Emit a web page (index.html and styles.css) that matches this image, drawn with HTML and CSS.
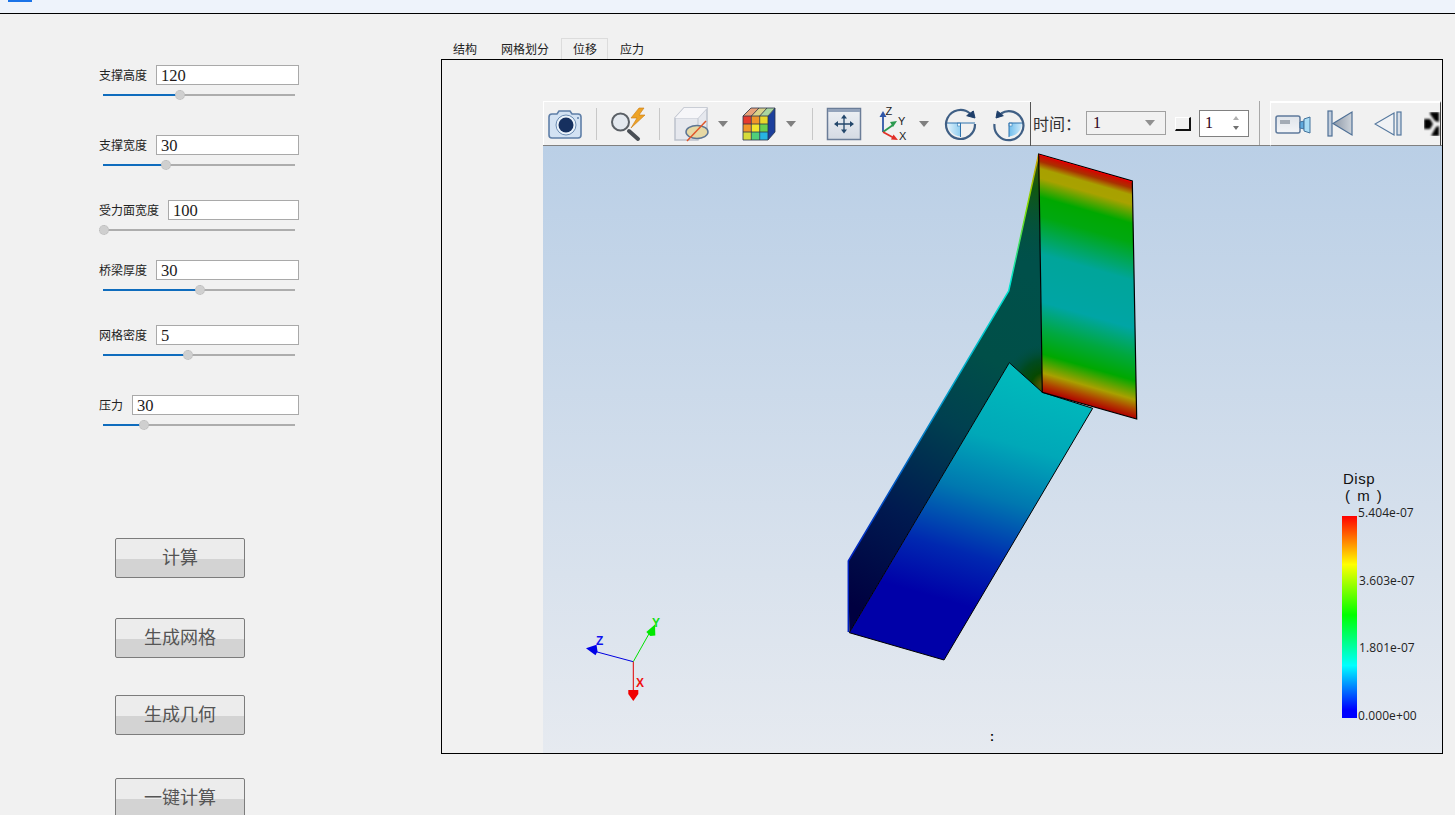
FILE: index.html
```html
<!DOCTYPE html>
<html lang="zh">
<head>
<meta charset="utf-8">
<title>位移</title>
<link rel="stylesheet" href="styles.css">
</head>
<body>
<header class="topbar"><span class="chip"></span></header>
<div class="main">
  <aside class="side">
    <div class="field gap-a">
      <div class="row"><label>支撑高度</label><input value="120"></div>
      <div class="slider"><i class="fill" style="width:77px"></i><b class="thumb"></b><i class="rest"></i></div>
    </div>
    <div class="field gap-b">
      <div class="row"><label>支撑宽度</label><input value="30"></div>
      <div class="slider"><i class="fill" style="width:63px"></i><b class="thumb"></b><i class="rest"></i></div>
    </div>
    <div class="field gap-c">
      <div class="row"><label>受力面宽度</label><input value="100"></div>
      <div class="slider"><i class="fill" style="width:1px"></i><b class="thumb"></b><i class="rest"></i></div>
    </div>
    <div class="field gap-b">
      <div class="row"><label>桥梁厚度</label><input value="30"></div>
      <div class="slider"><i class="fill" style="width:97px"></i><b class="thumb"></b><i class="rest"></i></div>
    </div>
    <div class="field gap-a">
      <div class="row"><label>网格密度</label><input value="5"></div>
      <div class="slider"><i class="fill" style="width:85px"></i><b class="thumb"></b><i class="rest"></i></div>
    </div>
    <div class="field">
      <div class="row"><label>压力</label><input value="30"></div>
      <div class="slider"><i class="fill" style="width:41px"></i><b class="thumb"></b><i class="rest"></i></div>
    </div>
    <div class="actions">
      <button class="btn b1">计算</button>
      <button class="btn b2">生成网格</button>
      <button class="btn b3">生成几何</button>
      <button class="btn">一键计算</button>
    </div>
  </aside>

  <section class="work">
    <nav class="tabs">
      <span class="tab">结构</span>
      <span class="tab">网格划分</span>
      <span class="tab active">位移</span>
      <span class="tab">应力</span>
    </nav>
    <div class="pane">
      <div class="toolbar">
        <div class="group g1">
          <svg class="ic m3" viewBox="0 0 36 36"><path d="M2 11q0-3 3-3h5l2-3h11l2 3h6q3 0 3 3v18q0 3-3 3H5q-3 0-3-3z" fill="#d3e2f3" stroke="#5f7fa8" stroke-width="1.6"/><circle cx="19" cy="19" r="10" fill="#eaf2fa" stroke="#6c8cb2"/><circle cx="19" cy="19" r="7.500" fill="#16305f"/><circle cx="31" cy="12" r="1" fill="#5f7fa8"/></svg>
          <span class="sep m13"></span>
          <svg class="ic m13" viewBox="0 0 36 36"><path d="M19 25l9 8" stroke="#4a4f55" stroke-width="4" stroke-linecap="round"/><circle cx="10.500" cy="16" r="8.500" fill="#e4e9ef" stroke="#5b6066" stroke-width="2"/><path d="M29 2l-8 10h6l-6 10 14-13h-6l5-7z" fill="#eda326" stroke="#c97a12" stroke-width=".6"/></svg>
          <span class="sep m13"></span>
          <svg class="ic m13" viewBox="0 0 36 36"><path d="M2 12l9-10h23v21l-9 11H2z" fill="#e6e8ee" stroke="#bcc1cc" stroke-width="1.500"/><path d="M2 12h23v22M25 12l9-10" fill="none" stroke="#c6cad4" stroke-width="1.200"/><path d="M11 2h23l-9 10H2z" fill="#f6f6f9"/><ellipse cx="24" cy="26" rx="11" ry="6.500" fill="#e6d8a4" stroke="#5c7594" stroke-width="1.500"/><path d="M14 35L33 15" stroke="#e0562a" stroke-width="1.500"/></svg>
          <svg class="arrow m8" viewBox="0 0 12 8"><path d="M1 1h10L6 7z" fill="#808080"/></svg>
          <svg class="ic m13" viewBox="0 0 36 36"><path d="M26 10l7-8v24l-7 8z" fill="#1c3f9c"/><path d="M1 10l8-8h24l-7 8z" fill="#d9d38a"/><path d="M9 2h8l-7 8H1z" fill="#e8a27a"/><path d="M25 2h8l-7 8h-8z" fill="#a9d6a0"/><rect x="1" y="10" width="8.300" height="8" fill="#e63b2e"/><rect x="9.300" y="10" width="8.400" height="8" fill="#f0962a"/><rect x="17.700" y="10" width="8.300" height="8" fill="#e8d82c"/><rect x="1" y="18" width="8.300" height="8" fill="#f0962a"/><rect x="9.300" y="18" width="8.400" height="8" fill="#f2e62c"/><rect x="17.700" y="18" width="8.300" height="8" fill="#68d050"/><rect x="1" y="26" width="8.300" height="8" fill="#d6dc3a"/><rect x="9.300" y="26" width="8.400" height="8" fill="#4fd07a"/><rect x="17.700" y="26" width="8.300" height="8" fill="#27b4e2"/><path d="M1 10h25v24H1zM9.300 10v24M17.700 10v24M1 18h25M1 26h25M26 10l7-8v24l-7 8M9 2h24M1 10l8-8M9.300 10l7.700-8M17.700 10l7.300-8" fill="none" stroke="#28344a" stroke-width=".8"/></svg>
          <svg class="arrow m7" viewBox="0 0 12 8"><path d="M1 1h10L6 7z" fill="#808080"/></svg>
          <span class="sep m15"></span>
          <svg class="ic m13" viewBox="0 0 36 36"><defs><linearGradient id="gFit" x1="0" y1="0" x2="0" y2="1"><stop offset="0" stop-color="#eef1f5"/><stop offset="1" stop-color="#d4dae3"/></linearGradient></defs><rect x="1.500" y="2.500" width="33" height="31" fill="url(#gFit)" stroke="#6b7d98" stroke-width="1.500"/><rect x="2" y="3" width="32" height="3" fill="#93a3bb"/><path d="M18 11v14M11 18h14" stroke="#23476b" stroke-width="1.300"/><path d="M18 8.500l3 4h-6zM18 27.500l3-4h-6zM8 18l4-3v6zM28 18l-4-3v6z" fill="#23476b"/></svg>
          <svg class="ic m14" viewBox="0 0 36 36"><path d="M7 26V10" stroke="#2f56a8" stroke-width="1.800"/><path d="M7 5l-3.500 6h7z" fill="#2f56a8"/><path d="M7 26l10-7" stroke="#2c9a50" stroke-width="1.800"/><path d="M21 15l-7 1 3 5z" fill="#2c9a50"/><path d="M7 26l11 6" stroke="#e23028" stroke-width="1.800"/><path d="M22 34l-7-.5 2.500-5z" fill="#e23028"/><text x="9.500" y="9" class="axl">Z</text><text x="22" y="19" class="axl">Y</text><text x="23" y="34" class="axl">X</text></svg>
          <svg class="arrow m6" viewBox="0 0 12 8"><path d="M1 1h10L6 7z" fill="#808080"/></svg>
          <svg class="ic m13" viewBox="0 0 36 36"><defs><linearGradient id="gRot1" x1="0" y1="0" x2="1" y2="0"><stop offset="0" stop-color="#dff1fb"/><stop offset="1" stop-color="#8fcdf0"/></linearGradient></defs><path d="M4.500 17H17.500V30.500A13.500 13.500 0 0 1 4.500 17z" fill="url(#gRot1)"/><rect x="14.500" y="17" width="3" height="3" fill="#f4fbff" stroke="#3d7fb5" stroke-width=".6"/><path d="M3 17H32M17.500 17V31" stroke="#2f73ad" stroke-width="1"/><path d="M27 7.500A14.500 14.500 0 1 0 32 18" fill="none" stroke="#3f5f85" stroke-width="2.200"/><path d="M30.300 5L32 12 23.700 9.700z" fill="#1f3f6a" stroke="#1f3f6a"/></svg>
          <svg class="ic m12" viewBox="0 0 36 36"><defs><linearGradient id="gRot2" x1="0" y1="0" x2="1" y2="0"><stop offset="0" stop-color="#6fbdec"/><stop offset="1" stop-color="#cfeafa"/></linearGradient></defs><path d="M18 17H31A13.500 13.500 0 0 1 18 30.500z" fill="url(#gRot2)"/><rect x="18" y="17" width="3" height="3" fill="#f4fbff" stroke="#3d7fb5" stroke-width=".6"/><path d="M18 17H32M18 17V31" stroke="#2f73ad" stroke-width="1"/><path d="M10 7.500A14.500 14.500 0 1 1 3.500 18" fill="none" stroke="#3f5f85" stroke-width="2.200"/><path d="M6.300 5L5 12 12.300 9.700z" fill="#1f3f6a" stroke="#1f3f6a"/></svg>
          <span class="sep dark m3 full"></span>
        </div>
        <div class="group g2">
          <span class="time">时间：</span>
          <div class="combo"><span>1</span><svg class="arrow" viewBox="0 0 12 8"><path d="M1 1h10L6 7z" fill="#909090"/></svg></div>
          <span class="corner"></span>
          <div class="spin"><span>1</span><svg class="updown" viewBox="0 0 10 18"><path d="M5 2l3 4H2z" fill="#b0b0b0"/><path d="M5 16l3-4H2z" fill="#707070"/></svg></div>
          <span class="sep m10 full"></span>
        </div>
        <div class="group g3">
          <svg class="ic m4" viewBox="0 0 36 36"><defs><linearGradient id="gCam" x1="0" y1="0" x2="0" y2="1"><stop offset="0" stop-color="#dfe4ea"/><stop offset="1" stop-color="#f2f4f7"/></linearGradient></defs><g transform="translate(0 4)"><rect x="1" y="6" width="24" height="17" rx="2" fill="url(#gCam)" stroke="#5f7a9c" stroke-width="1.500"/><rect x="5" y="10" width="10" height="4" fill="#a3abb5"/><path d="M25 12l4-1v8l-4-1z" fill="#5ea9dc" stroke="#43729c"/><path d="M29 9l6-2v16l-6-2z" fill="#a9dcf4" stroke="#43729c"/></g></svg>
          <svg class="ic28 m15" viewBox="0 0 28 28"><defs><linearGradient id="gSkip" x1="0" y1="0" x2="1" y2="0"><stop offset="0" stop-color="#8c97a6"/><stop offset="1" stop-color="#cdd3da"/></linearGradient></defs><rect x="2" y="1" width="4" height="25" fill="#c2cedd" stroke="#4f7096" stroke-width="1.200"/><path d="M26 2v23L7 13.500z" fill="url(#gSkip)" stroke="#4f7096" stroke-width="1.200"/></svg>
          <svg class="ic28 m20" viewBox="0 0 28 28"><rect x="23" y="2" width="4" height="23" fill="#d8dfe8" stroke="#55789e" stroke-width="1.200"/><path d="M20 3v22L1 14z" fill="#f0f2f5" stroke="#55789e" stroke-width="1.200"/></svg>
          <svg class="clip m22" viewBox="0 0 16 24"><defs><filter id="soft" x="-10%" y="-10%" width="120%" height="120%"><feGaussianBlur stdDeviation=".9"/></filter></defs><g filter="url(#soft)"><path d="M6 0H15V10L11 9 6 2zM15 14V24H7L12 15zM0 7H6L9 12 6 17H0z" fill="#000"/></g></svg>
        </div>
      </div>
      <div class="view">
        <svg class="scene" viewBox="543 146 899 607">
          <defs>
            <linearGradient id="gPlate" gradientUnits="userSpaceOnUse" x1="1085.500" y1="167.500" x2="1022.700" y2="386.300">
              <stop offset="0" stop-color="#d60000"/><stop offset=".03" stop-color="#aa3000"/><stop offset=".06" stop-color="#a8a000"/><stop offset=".1" stop-color="#a8a200"/><stop offset=".18" stop-color="#00a800"/><stop offset=".26" stop-color="#00a810"/><stop offset=".42" stop-color="#00a59a"/><stop offset=".62" stop-color="#00a5a5"/><stop offset=".74" stop-color="#00a840"/><stop offset=".84" stop-color="#00a800"/><stop offset=".92" stop-color="#a8a000"/><stop offset=".965" stop-color="#b04000"/><stop offset="1" stop-color="#b00000"/>
            </linearGradient>
            <linearGradient id="gFlange" gradientUnits="userSpaceOnUse" x1="1040" y1="370" x2="962" y2="640">
              <stop offset="0" stop-color="#00bcbc"/><stop offset=".28" stop-color="#00a8b8"/><stop offset=".48" stop-color="#0078b0"/><stop offset=".7" stop-color="#0028b0"/><stop offset=".88" stop-color="#0000a8"/>
            </linearGradient>
            <linearGradient id="gWeb" gradientUnits="userSpaceOnUse" x1="862" y1="610" x2="1040" y2="280">
              <stop offset="0" stop-color="#000040"/><stop offset=".28" stop-color="#001a50"/><stop offset=".55" stop-color="#004050"/><stop offset=".75" stop-color="#004f48"/><stop offset="1" stop-color="#00504a"/>
            </linearGradient>
            <radialGradient id="gWebEnd" gradientUnits="userSpaceOnUse" cx="1044" cy="385" r="42">
              <stop offset="0" stop-color="#6a5a00"/><stop offset=".3" stop-color="#064800"/><stop offset=".6" stop-color="#004a20"/><stop offset="1" stop-color="#004f48" stop-opacity="0"/>
            </radialGradient>
            <linearGradient id="gWebTop" gradientUnits="userSpaceOnUse" x1="1036" y1="155" x2="1028" y2="265">
              <stop offset="0" stop-color="#4e5400"/><stop offset=".3" stop-color="#105810"/><stop offset="1" stop-color="#00504a" stop-opacity="0"/>
            </linearGradient>
            <linearGradient id="gEdge" gradientUnits="userSpaceOnUse" x1="1038" y1="154" x2="848" y2="561">
              <stop offset="0" stop-color="#d0a000"/><stop offset=".12" stop-color="#80e000"/><stop offset=".28" stop-color="#00e8d0"/><stop offset=".55" stop-color="#00a0c8"/><stop offset="1" stop-color="#0020c0"/>
            </linearGradient>
          </defs>
          <polygon points="1038.700,154 1008.700,291 848.300,561 849.300,632.700 1009.300,362.700 1042.300,392.300" fill="url(#gWeb)"/>
          <polygon points="1038.700,154 1008.700,291 1009.300,362.700 1042.300,392.300" fill="url(#gWebEnd)"/>
          <polygon points="1038.700,154 1008.700,291 1040,300" fill="url(#gWebTop)"/>
          <polyline points="848.300,632 848.300,561 1008.700,291 1038.700,154" fill="none" stroke="url(#gEdge)" stroke-width="1.500"/>
          <polygon points="1009.300,362.700 1042.300,392.300 1092.700,408.300 944,660 849.300,632.700" fill="url(#gFlange)" stroke="#000" stroke-width="1"/>
          <polygon points="1038.700,154 1132.300,181 1136.700,419 1042.300,392.300" fill="url(#gPlate)" stroke="#000" stroke-width="1.200"/>
          <line x1="1039" y1="155" x2="1132" y2="182" stroke="#f00000" stroke-width="1"/>
          <g class="triad">
            <line x1="633.300" y1="661.700" x2="596" y2="651.700" stroke="#0000e0" stroke-width="1"/>
            <path d="M586 648.300l10.500-3.500 1 6.500-2 4z" fill="#0000e8"/>
            <line x1="633.300" y1="661.700" x2="650" y2="632" stroke="#00e000" stroke-width="1"/>
            <path d="M655 624.500l.3 11-5 .5-4-4z" fill="#00e800"/>
            <line x1="633.300" y1="661.700" x2="633.300" y2="690" stroke="#e00000" stroke-width="1"/>
            <path d="M633.300 701l-5-7v-4h10v4z" fill="#f00000"/>
            <text x="596" y="645" class="tz">Z</text>
            <text x="652" y="627" class="ty">Y</text>
            <text x="636" y="687" class="tx">X</text>
          </g>
        </svg>
        <div class="legend">
          <div class="lg-title">Disp</div>
          <div class="lg-title unit">( m )</div>
          <div class="lg-bar"></div>
          <span class="lg-v v1">5.404e-07</span>
          <span class="lg-v v2">3.603e-07</span>
          <span class="lg-v v3">1.801e-07</span>
          <span class="lg-v v4">0.000e+00</span>
        </div>
        <span class="dots">:</span>
      </div>
    </div>
  </section>
</div>
</body>
</html>
```

FILE: styles.css
```css
* { box-sizing: border-box; }
html, body { margin: 0; height: 815px; overflow: hidden; }
body {
  background: #f1f1f1;
  color: #222;
  font-family: "Noto Sans CJK SC", "Liberation Sans", sans-serif;
  font-size: 12px;
}
.topbar { height: 14px; background: #eef3fb; border-bottom: 1px solid #000; padding-left: 8px; }
.chip { display: block; width: 24px; height: 2px; background: #1a73e8; }
.main { display: flex; height: 801px; }

/* sidebar */
.side { width: 441px; flex: none; padding: 51px 0 0 99px; }
.field { width: 200px; height: 40px; }
.gap-a { margin-bottom: 30px; }
.gap-b { margin-bottom: 25px; }
.gap-c { margin-bottom: 20px; }
.row { display: flex; align-items: center; height: 20px; gap: 9px; }
.row label { flex: none; font-size: 12px; line-height: 22px; color: #222; }
.row input {
  flex: 1; min-width: 0; height: 20px; padding: 1px 0 0 4px;
  border: 1px solid #a9a9a9; background: #fff; outline: 0;
  font: 16.500px/18px "Liberation Serif", serif; color: #221a1a;
}
.slider { display: flex; align-items: center; height: 20px; width: 192px; margin-left: 4px; }
.slider i { display: block; height: 2px; }
.fill { background: #0f6cbd; flex: none; }
.rest { background: #adadad; flex: 1; }
.thumb {
  flex: none; width: 10px; height: 10px; margin: 0 -5px; position: relative;
  border-radius: 50%; background: #cfcfcf; border: 1px dotted #b8b8b8;
}

.actions { display: flex; flex-direction: column; align-items: flex-start; padding: 103px 0 0 16px; }
.btn {
  flex: none; width: 130px; height: 40px; padding: 0 0 4px;
  border: 1px solid #7c7c7c; border-radius: 2px;
  background: linear-gradient(#ececec 0 52%, #d3d3d3 52% 100%);
  font: 18px/34px "Noto Sans CJK SC", sans-serif; color: #555;
}
.b1 { margin-bottom: 40px; }
.b2 { margin-bottom: 37px; }
.b3 { margin-bottom: 43px; }

/* tabs */
.work { width: 1002px; flex: none; padding-top: 24px; }
.tabs { display: flex; height: 21px; }
.tab { padding: 0 12px; line-height: 21px; font-size: 12px; color: #222; }
.tab.active { border: 1px solid #dcdcdc; border-bottom: 0; padding: 0 10px 0 11px; line-height: 20px; }
.pane {
  height: 695px; border: 1px solid #000; padding: 41px 0 0 101px;
  display: flex; flex-direction: column;
}

/* toolbar */
.toolbar { display: flex; flex: none; height: 45px; border-bottom: 1px solid #808080; }
.group { display: flex; align-items: center; flex: none; }
.g1 { width: 488px; border-top: 1px solid #fff; border-left: 1px solid #fff; height: 44px; }
.g2 { height: 44px; }
.g3 { width: 171px; margin-left: 10px; height: 45px; border-top: 2px solid #fff; border-left: 1px solid #fff; border-right: 1px solid #444; border-bottom: 1px solid #808080; }
.ic { width: 36px; height: 36px; flex: none; }
.ic28 { width: 28px; height: 28px; flex: none; }
.clip { width: 16px; height: 24px; flex: none; }
.arrow { width: 12px; height: 8px; flex: none; }
.sep { width: 1px; height: 32px; background: #c8c8c8; flex: none; }
.sep.full { height: 44px; background: #a8a8a8; }
.sep.dark { background: #555; }
.m3 { margin-left: 3px; }
.m4 { margin-left: 4px; }
.m6 { margin-left: 6px; }
.m7 { margin-left: 7px; }
.m8 { margin-left: 8px; }
.m10 { margin-left: 10px; }
.m12 { margin-left: 12px; }
.m13 { margin-left: 13px; }
.m14 { margin-left: 14px; }
.m15 { margin-left: 15px; }
.m20 { margin-left: 20px; }
.m22 { margin-left: 22px; }
.axl { font: 11px "Liberation Sans", sans-serif; fill: #222; }

.time { margin-left: 2px; width: 48px; font: 16px/24px "Noto Sans CJK TC", sans-serif; color: #333; flex: none; white-space: nowrap; }
.combo {
  display: flex; align-items: center; justify-content: space-between;
  width: 80px; height: 24px; margin-left: 5px; padding: 0 9px 0 6px; flex: none;
  border: 1px solid #a0a0a0; font: 16px "Liberation Serif", serif; color: #300020;
}
.corner {
  width: 16px; height: 14px; margin-left: 9px; margin-top: 2px; flex: none;
  border-style: solid; border-width: 1px 2px 2px 1px; border-color: #fff #111 #111 #fff;
}
.spin {
  display: flex; align-items: center; justify-content: space-between;
  width: 50px; height: 27px; margin-left: 8px; padding: 0 7px 0 5px; flex: none;
  background: #fff; border: 1px solid #808080; font: 16px "Liberation Serif", serif; color: #300020;
}
.updown { width: 10px; height: 18px; }

/* viewport */
.view { flex: 1; position: relative; background: linear-gradient(#bacfe6, #e6eaf0); }
.scene { position: absolute; inset: 0; width: 100%; height: 100%; display: block; }
.triad text { font: bold 12px "Liberation Sans", sans-serif; }
.tz { fill: #1010f0; }
.ty { fill: #10e010; }
.tx { fill: #f01010; }

.legend { position: absolute; left: 799px; top: 325px; width: 90px; height: 260px; font-family: "Open Sans", sans-serif; color: #222; }
.lg-title { position: absolute; left: 1px; top: -1px; font: 15px/17px "Liberation Sans", sans-serif; letter-spacing: .5px; white-space: nowrap; color: #111; }
.lg-title.unit { left: 3px; top: 16px; word-spacing: 2px; letter-spacing: .5px; }
.lg-bar {
  position: absolute; left: 0; top: 45px; width: 15px; height: 202px;
  background: linear-gradient(#ff0000 0%, #ff8000 12%, #ffff00 24%, #00ff00 49%, #00ffff 74%, #0080ff 85%, #0000ff 96%);
}
.lg-v { position: absolute; left: 16px; font-size: 12px; line-height: 14px; letter-spacing: .1px; white-space: nowrap; }
.v1 { top: 35px; }
.v2 { top: 103px; left: 17px; }
.v3 { top: 170px; left: 17px; }
.v4 { top: 238px; }
.dots { position: absolute; left: 447px; top: 584px; font: bold 12px "Liberation Sans", sans-serif; color: #000; }
```
